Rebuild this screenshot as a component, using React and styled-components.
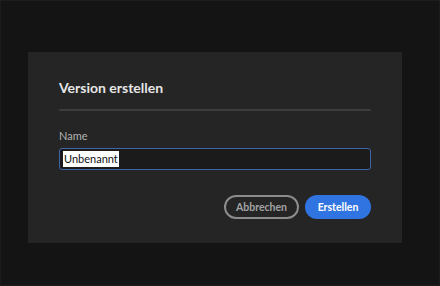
import styled, { createGlobalStyle } from 'styled-components';

const GlobalStyle = createGlobalStyle`
  html, body {
    margin: 0;
    padding: 0;
    background: #141414;
  }
  body {
    font-family: "Lato", "Noto Sans", sans-serif;
  }
`;

export default function App() {
  return (
    <>
      <GlobalStyle />
      <Screen>
        <Dialog>
          <Title>Version erstellen</Title>
          <Divider />
          <Label htmlFor="version-name">Name</Label>
          <InputBox>
            <Selected>Unbenannt</Selected>
          </InputBox>
          <ButtonRow>
            <OutlineButton>Abbrechen</OutlineButton>
            <PrimaryButton>Erstellen</PrimaryButton>
          </ButtonRow>
        </Dialog>
      </Screen>
    </>
  );
}

const Screen = styled.div`
  box-sizing: border-box;
  width: 440px;
  height: 286px;
  border: 1px solid #1c1c1c;
  padding: 51px 38px 0 27px;
`;

const Dialog = styled.div`
  box-sizing: border-box;
  width: 374px;
  height: 191px;
  background: #252525;
  padding: 26px 31px 0 31px;
  display: flex;
  flex-direction: column;
`;

const Title = styled.h2`
  margin: 0;
  font-size: 14px;
  font-weight: 700;
  color: #e6e6e6;
  line-height: 20px;
`;

const Divider = styled.div`
  height: 2px;
  background: #3d3d3d;
  margin-top: 11px;
  border-radius: 1px;
`;

const Label = styled.label`
  margin-top: 18px;
  font-size: 11px;
  color: #b3b3b3;
  line-height: 14px;
`;

const InputBox = styled.div`
  box-sizing: border-box;
  margin-top: 5px;
  height: 22px;
  background: #1b1b1b;
  border: 1px solid #3f64a8;
  border-radius: 3px;
  display: flex;
  align-items: center;
  padding-left: 3px;
`;

const Selected = styled.span`
  background: #ffffff;
  color: #111111;
  font-size: 11px;
  line-height: 16px;
  padding: 0 1px;
`;

const ButtonRow = styled.div`
  margin-top: 25px;
  display: flex;
  justify-content: flex-end;
  gap: 6px;
`;

const BaseButton = styled.button`
  box-sizing: border-box;
  height: 24px;
  border-radius: 12px;
  font-family: inherit;
  font-size: 10.5px;
  font-weight: 700;
  padding: 0;
  cursor: pointer;
`;

const OutlineButton = styled(BaseButton)`
  width: 75px;
  background: transparent;
  border: 2px solid #8c8c8c;
  color: #a3a3a3;
`;

const PrimaryButton = styled(BaseButton)`
  width: 66px;
  background: #2f74e0;
  border: none;
  color: #ffffff;
`;
